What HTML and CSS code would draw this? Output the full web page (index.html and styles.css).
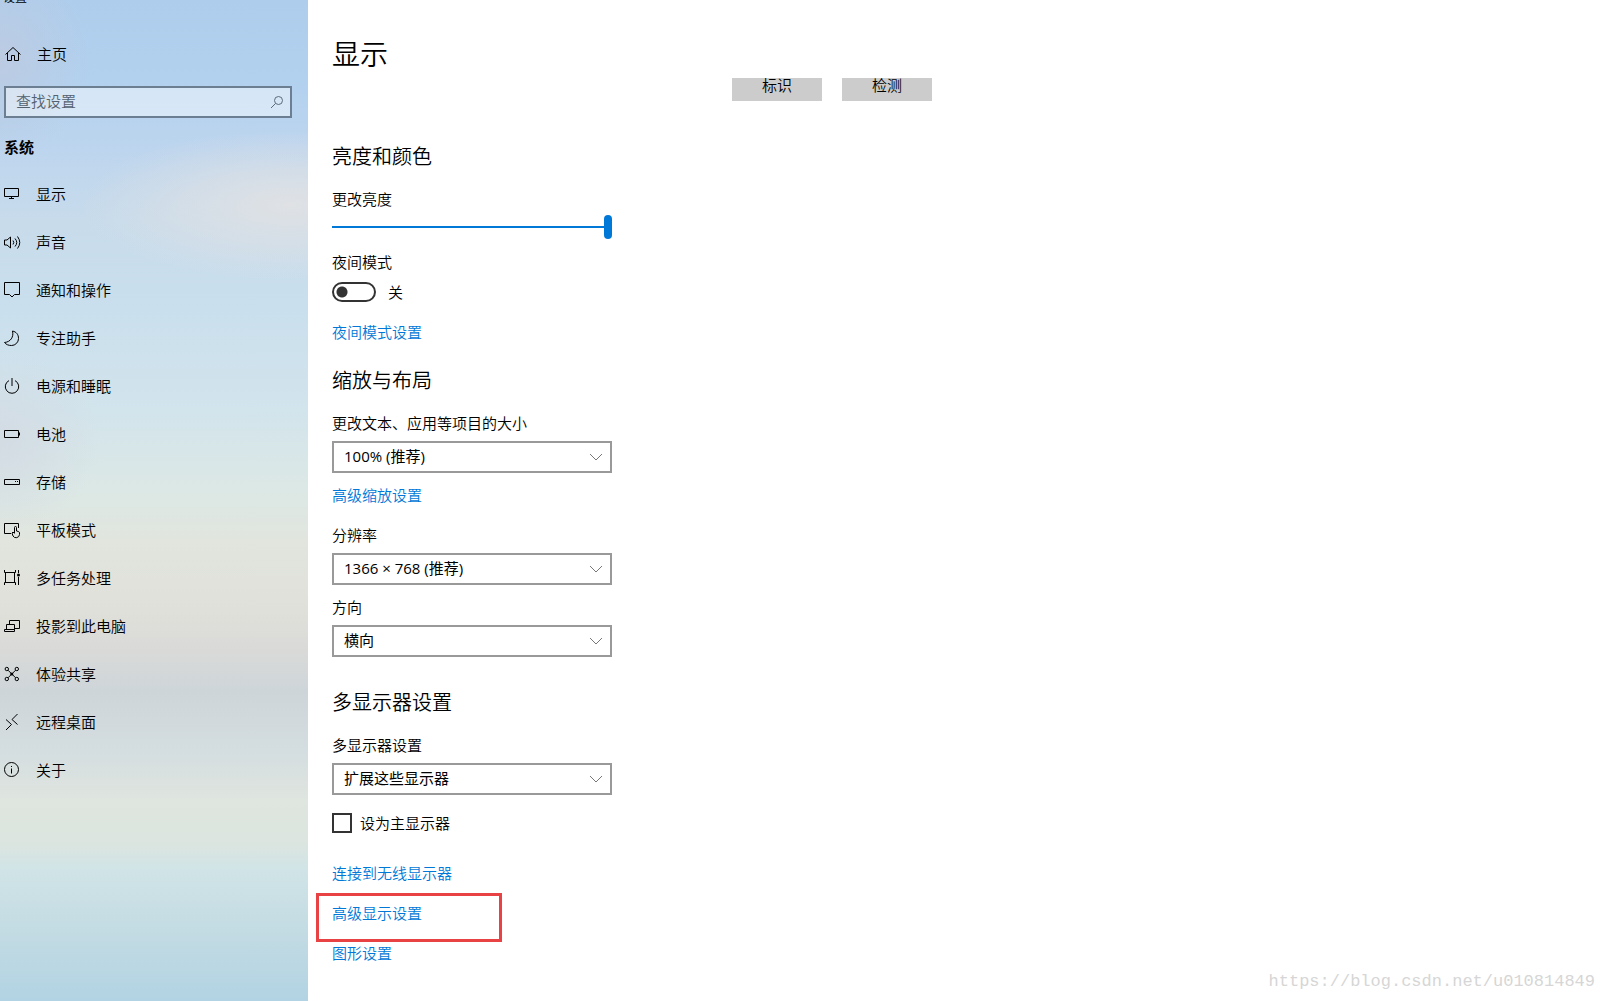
FILE: index.html
```html
<!DOCTYPE html>
<html lang="zh-CN">
<head>
<meta charset="utf-8">
<meta name="viewport" content="width=device-width, initial-scale=1">
<title>设置</title>
<link rel="stylesheet" href="styles.css">
</head>
<body>
<div class="app">
  <aside class="sidebar">
    <div class="app-title">设置</div>
    <a class="nav-link home" href="#">
      <svg class="icon" viewBox="0 0 20 20"><path d="M2.500 10.500 10 3.500l7.500 7M4.500 9v7.500h4v-5h3v5h4V9"/></svg>
      主页
    </a>
    <form class="search">
      <input class="search-input" type="search" placeholder="查找设置" aria-label="查找设置">
      <svg class="search-icon" viewBox="0 0 14 14"><circle cx="8.500" cy="5.500" r="4"/><path d="M5.500 8.500 1 13"/></svg>
    </form>
    <h2 class="nav-heading">系统</h2>
    <nav class="nav">
      <a class="nav-link" href="#"><svg class="icon" viewBox="0 0 20 20"><path d="M2.500 4.500h14v8h-14zM9.500 12.500v2M7 14.500h5"/></svg>显示</a>
      <a class="nav-link" href="#"><svg class="icon" viewBox="0 0 20 20"><path d="M2.500 8h2.500l3.500-3v11L5 13H2.500zM11 8.500q1.500 2 0 4M13 6.500q3.500 4 0 8M15.500 4.500q4.500 6 0 12"/></svg>声音</a>
      <a class="nav-link" href="#"><svg class="icon" viewBox="0 0 20 20"><path d="M2.500 2.500h15v12h-5l-2.500 2.500-2.500-2.500h-5z"/></svg>通知和操作</a>
      <a class="nav-link" href="#"><svg class="icon" viewBox="0 0 20 20"><path d="M10.500 3C14.500 4 16.500 6.500 16.500 10.500a7 7 0 0 1-7 7C6.500 17.500 4 16.500 2.500 14.500 8.500 14 12 9 10.500 3z"/></svg>专注助手</a>
      <a class="nav-link" href="#"><svg class="icon" viewBox="0 0 20 20"><path d="M7 4.600a6.700 6.700 0 1 0 6 0M10 2v8"/></svg>电源和睡眠</a>
      <a class="nav-link" href="#"><svg class="icon" viewBox="0 0 20 20"><path d="M2.500 6.500h14v7h-14zM17.500 8.500v3"/></svg>电池</a>
      <a class="nav-link" href="#"><svg class="icon" viewBox="0 0 20 20"><path d="M2.500 7.500h15v5h-15zM13 9.500h1M15 9.500h1"/></svg>存储</a>
      <a class="nav-link" href="#"><svg class="icon" viewBox="0 0 20 20"><path d="M9 13.500H2.500v-10h14V8M12.500 13V7.500a1 1 0 0 1 2 0V11l2 .500q1 .500 1 1.500v1.500a3.500 3.500 0 0 1-6.500 1.500l-1-3 1-1 1.500 1.500"/></svg>平板模式</a>
      <a class="nav-link" href="#"><svg class="icon" viewBox="0 0 20 20"><path d="M2.500 2v2.500h11V2M2.500 17v-2.500h11V17M3.500 4.500v10M12.500 4.500v10M16.500 2v3M16.500 9v8"/><circle class="fill" cx="16.500" cy="7" r="1.500"/></svg>多任务处理</a>
      <a class="nav-link" href="#"><svg class="icon" viewBox="0 0 20 20"><path d="M7.500 8.500v-4h10v8h-5M4.500 8.500h8v5h-8zM2.500 13.500h10v2h-10z"/></svg>投影到此电脑</a>
      <a class="nav-link" href="#"><svg class="icon" viewBox="0 0 20 20"><circle cx="4.800" cy="5" r="1.700"/><circle cx="14.800" cy="5" r="1.700"/><circle cx="4.800" cy="15" r="1.700"/><circle cx="14.800" cy="15" r="1.700"/><circle class="fill" cx="9.800" cy="10" r="1.600"/><path d="m6 6.200 7.600 7.600M13.600 6.200 6 13.800"/></svg>体验共享</a>
      <a class="nav-link" href="#"><svg class="icon" viewBox="0 0 20 20"><path d="m4 7.500 5.500 5L4 18M15.500 2 10 7.500l5.500 5"/></svg>远程桌面</a>
      <a class="nav-link" href="#"><svg class="icon" viewBox="0 0 20 20"><circle cx="9.500" cy="9.500" r="7"/><path d="M9.500 8.500v5M9.500 6v1"/></svg>关于</a>
    </nav>
  </aside>

  <main class="content">
    <h1 class="page-title">显示</h1>
    <div class="monitor-actions">
      <button class="action" type="button">标识</button>
      <button class="action" type="button">检测</button>
    </div>

    <section class="group">
      <h2 class="group-title">亮度和颜色</h2>
      <label class="label" for="brightness">更改亮度</label>
      <input class="slider" id="brightness" type="range" min="0" max="100" value="100">
      <label class="label" for="night">夜间模式</label>
      <div class="toggle-row">
        <input class="toggle" id="night" type="checkbox" role="switch">
        <span>关</span>
      </div>
      <a class="link" href="#">夜间模式设置</a>
    </section>

    <section class="group">
      <h2 class="group-title">缩放与布局</h2>
      <label class="label" for="scale">更改文本、应用等项目的大小</label>
      <div class="select">
        <select class="select-box" id="scale"><option>100% (推荐)</option></select>
        <svg class="chevron" viewBox="0 0 14 8"><path d="m1 1 6 6 6-6"/></svg>
      </div>
      <a class="link scale-link" href="#">高级缩放设置</a>
      <label class="label" for="resolution">分辨率</label>
      <div class="select">
        <select class="select-box" id="resolution"><option>1366 × 768 (推荐)</option></select>
        <svg class="chevron" viewBox="0 0 14 8"><path d="m1 1 6 6 6-6"/></svg>
      </div>
      <label class="label next-label" for="orientation">方向</label>
      <div class="select">
        <select class="select-box" id="orientation"><option>横向</option></select>
        <svg class="chevron" viewBox="0 0 14 8"><path d="m1 1 6 6 6-6"/></svg>
      </div>
    </section>

    <section class="group displays">
      <h2 class="group-title">多显示器设置</h2>
      <label class="label" for="displays">多显示器设置</label>
      <div class="select">
        <select class="select-box" id="displays"><option>扩展这些显示器</option></select>
        <svg class="chevron" viewBox="0 0 14 8"><path d="m1 1 6 6 6-6"/></svg>
      </div>
      <label class="check-row"><input class="check" type="checkbox">设为主显示器</label>
      <div class="links">
        <a class="link" href="#">连接到无线显示器</a>
        <a class="link marked" href="#">高级显示设置</a>
        <a class="link" href="#">图形设置</a>
      </div>
    </section>
  </main>
  <div class="watermark">https://blog.csdn.net/u010814849</div>
</div>
</body>
</html>
```
FILE: styles.css
```css
*,
*::after {
  box-sizing: border-box;
}

body {
  margin: 0;
  background: #fff;
  color: #000;
  font: 350 15px/20px "Noto Sans CJK SC", sans-serif;
}

h1,
h2 {
  margin: 0;
  font-weight: inherit;
}

input,
select,
button {
  margin: 0;
  color: inherit;
  font: inherit;
}

a {
  text-decoration: none;
}

svg {
  fill: none;
  stroke: currentColor;
}

.app {
  position: relative;
  display: grid;
  grid-template-columns: 308px 1fr;
  min-height: 100vh;
  overflow: hidden;
}

/* Sidebar */
.sidebar {
  background:
    radial-gradient(ellipse 210px 75px at 290px 205px, #dfe1e4 0%, #dfe1e499 45%, #dfe1e400 100%),
    radial-gradient(ellipse 90px 100px at 0 60px, #bccbe2 0%, #bccbe200 100%),
    radial-gradient(ellipse 100px 90px at 0 440px, #d3dbe3 0%, #d3dbe300 100%),
    linear-gradient(#aecdec 0, #b2d1ef 8%, #bdd5ee 15%, #c7dbeb 22%, #cadfed 31%, #d2e4ec 41%, #dce8e5 49%, #e1e5de 54%, #e0e0da 61%, #d9dad8 65%, #ced5d9 69%, #d4dde0 75%, #dfe5df 80%, #dce5df 84%, #d0e4e7 87%, #c3dbe3 93%, #b2d3e3 100%);
}

.app-title {
  margin-top: -11px;
  padding-left: 3px;
  font-size: 12px;
  line-height: 16px;
}

.nav-link {
  display: flex;
  align-items: center;
  gap: 14px;
  height: 48px;
  padding-left: 2px;
  color: #000;
}

.home {
  margin-top: 25px;
  padding-left: 3px;
}

.icon {
  width: 20px;
  height: 20px;
}

.fill {
  fill: currentColor;
  stroke: none;
}

.search {
  display: flex;
  align-items: center;
  height: 32px;
  margin: 8px 16px 0 4px;
  padding-right: 6px;
  border: 2px solid #6c7f92;
  background: #ffffff73;
}

.search-input {
  flex: 1;
  min-width: 0;
  padding: 0 0 2px 10px;
  border: 0;
  outline: 0;
  background: none;
}

.search-input::placeholder {
  color: #53616f;
  opacity: 1;
}

.search-icon {
  width: 14px;
  height: 14px;
  color: #5a6b7c;
}

.nav-heading {
  margin: 19px 0 13px 4px;
  font-size: 15px;
  font-weight: 700;
}

/* Main column */
.content {
  padding: 35px 24px 0;
}

.page-title {
  margin-bottom: 7px;
  font-size: 28px;
  line-height: 36px;
}

.monitor-actions {
  display: flex;
  gap: 20px;
  margin-left: 400px;
}

.action {
  width: 90px;
  height: 23px;
  padding: 0 0 9px;
  border: 0;
  background: #ccc;
  line-height: 14px;
}

.group {
  display: flex;
  flex-direction: column;
  align-items: flex-start;
  width: 280px;
  margin-top: 24px;
}

.monitor-actions + .group {
  margin-top: 41px;
}

.group-title {
  margin-bottom: 19px;
  font-size: 20px;
  line-height: 28px;
}

.displays {
  margin-top: 31px;
}

.slider {
  width: 100%;
  height: 24px;
  margin: 6px 0 13px;
  appearance: none;
  background: linear-gradient(#0078d7, #0078d7) center / 100% 2px no-repeat;
}

.slider::-webkit-slider-thumb {
  width: 8px;
  height: 24px;
  border-radius: 4px;
  appearance: none;
  background: #0078d7;
}

.toggle-row {
  display: flex;
  align-items: center;
  gap: 12px;
  margin: 10px 0 20px;
}

.toggle {
  width: 44px;
  height: 20px;
  border: 2px solid #333;
  border-radius: 10px;
  appearance: none;
  background: radial-gradient(circle at 8px 8px, #333 5px, #33333300 6px);
}

.link {
  color: #0078d7;
}

.select {
  display: grid;
  align-items: center;
  width: 100%;
  margin-top: 8px;
}

.select-box,
.chevron {
  grid-area: 1 / 1;
}

.select-box {
  height: 32px;
  padding: 0 32px 2px 10px;
  border: 2px solid #999;
  border-radius: 0;
  appearance: none;
  background: #fff;
  font-family: "Open Sans", "Noto Sans CJK SC", sans-serif;
  font-weight: 400;
}

.chevron {
  justify-self: end;
  width: 14px;
  height: 8px;
  margin-right: 9px;
  color: #777;
  pointer-events: none;
}

.scale-link {
  margin: 12px 0 20px;
}

.next-label {
  margin-top: 12px;
}

.check-row {
  display: flex;
  align-items: center;
  gap: 8px;
  margin-top: 18px;
}

.check {
  width: 20px;
  height: 20px;
  border: 2px solid #333;
  appearance: none;
}

.links {
  display: flex;
  flex-direction: column;
  align-items: flex-start;
  gap: 20px;
  margin: 30px 0 24px;
}

/* Red frame drawn around the highlighted link */
.marked {
  position: relative;
}

.marked::after {
  position: absolute;
  top: -10px;
  left: -16px;
  width: 186px;
  height: 49px;
  border: 3px solid #e84245;
  content: "";
}

.watermark {
  position: absolute;
  right: 8px;
  bottom: 9px;
  color: #d6d6d6;
  font: 17px/20px "Liberation Mono", monospace;
}
```
